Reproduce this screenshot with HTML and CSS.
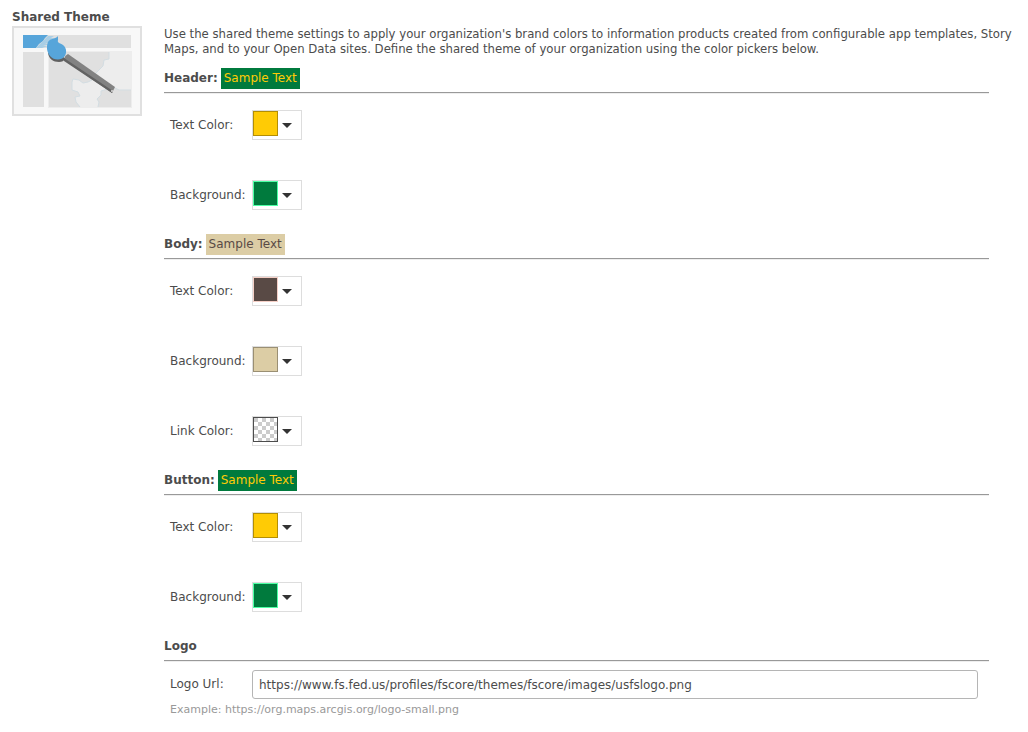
FILE: index.html
```html
<!DOCTYPE html>
<html lang="en">
<head>
    <meta charset="UTF-8">
    <meta name="viewport" content="width=device-width, initial-scale=1.0">
    <title>Shared Theme</title>
    <link rel="stylesheet" href="styles.css">
</head>
<body>
    <h1 class="page-title">Shared Theme</h1>
    <div class="theme">
        <svg class="theme-thumb" viewBox="0 0 130 90" role="img" aria-label="Shared theme">
            <rect x="1" y="1" width="128" height="88" fill="#f8f8f8" stroke="#e0e0e0" stroke-width="2"/>
            <rect x="11" y="9" width="108" height="13" fill="#e0e0e0"/>
            <path d="M11 9H36L33 12L31 15L27 18L24 22H11Z" fill="#57a5da"/>
            <path d="M36 10H42L39 12H43L37 15H42L33 18H38L31 20H36L30 22H24L28 18L31 15Z" fill="#a9cee5"/>
            <rect x="11" y="26" width="21" height="55" fill="#e0e0e0"/>
            <rect x="36" y="25" width="84" height="57" fill="#e0e0e0"/>
            <path d="M97 26V33L92 34L91 40L87 44L83 48L80 54L76 56L71 57L67 54L61 53L60 56L60 64L66 66L68 70L63 71L64 76L68 81H86L87 76L85 73L89 69V65L99 62H103L107 64H120V26Z" fill="#ededed"/>
            <path d="M97 26V33L92 34L91 40L87 44L83 48L80 54L76 56L71 57L67 54L61 53L60 56L60 64L66 66L68 70L63 71L64 76L68 81M86 81L87 76L85 73L89 69V65L99 62H103L107 64H119" fill="none" stroke="#d3dde2"/>
            <rect x="36.500" y="25.500" width="83" height="56" fill="none" stroke="#ededed"/>
            <path d="M56 28Q52 30 52 34L100 67L103 61Z" fill="#828282"/>
            <path d="M52 32L101 65L100 67L52 35Z" fill="#626262"/>
            <circle cx="100" cy="65" r="1" fill="#ddd"/>
            <path d="M36 27C37 33 41 36 47 36C50 36 52 35 53 33L50 29Z" fill="#606060"/>
            <path d="M46 10C44 13 38 12 36 16C34 21 35 26 38 30C42 35 50 34 52 31C55 28 55 22 51 19C48 17 45 17 46 14Z" fill="#57a5da"/>
        </svg>

        <div class="theme-settings">
            <p class="description">Use the shared theme settings to apply your organization's brand colors to information products created from configurable app templates, Story Maps, and to your Open Data sites. Define the shared theme of your organization using the color pickers below.</p>

            <section class="group">
                <h2 class="group-title">Header: <span class="sample sample-green">Sample Text</span></h2>
                <div class="rows">
                    <div class="row">
                        <label for="header-text">Text Color:</label>
                        <button type="button" class="picker" id="header-text"><span class="swatch yellow"></span><span class="arrow"></span></button>
                    </div>
                    <div class="row">
                        <label for="header-bg">Background:</label>
                        <button type="button" class="picker" id="header-bg"><span class="swatch green"></span><span class="arrow"></span></button>
                    </div>
                </div>
            </section>

            <section class="group">
                <h2 class="group-title">Body: <span class="sample sample-tan">Sample Text</span></h2>
                <div class="rows">
                    <div class="row">
                        <label for="body-text">Text Color:</label>
                        <button type="button" class="picker" id="body-text"><span class="swatch brown"></span><span class="arrow"></span></button>
                    </div>
                    <div class="row">
                        <label for="body-bg">Background:</label>
                        <button type="button" class="picker" id="body-bg"><span class="swatch tan"></span><span class="arrow"></span></button>
                    </div>
                    <div class="row">
                        <label for="body-link">Link Color:</label>
                        <button type="button" class="picker" id="body-link"><span class="swatch empty"></span><span class="arrow"></span></button>
                    </div>
                </div>
            </section>

            <section class="group">
                <h2 class="group-title">Button: <span class="sample sample-green">Sample Text</span></h2>
                <div class="rows">
                    <div class="row">
                        <label for="button-text">Text Color:</label>
                        <button type="button" class="picker" id="button-text"><span class="swatch yellow"></span><span class="arrow"></span></button>
                    </div>
                    <div class="row">
                        <label for="button-bg">Background:</label>
                        <button type="button" class="picker" id="button-bg"><span class="swatch green"></span><span class="arrow"></span></button>
                    </div>
                </div>
            </section>

            <section class="group">
                <h2 class="group-title">Logo</h2>
                <div class="logo-row">
                    <label for="logo-url">Logo Url:</label>
                    <input type="text" id="logo-url" value="https://www.fs.fed.us/profiles/fscore/themes/fscore/images/usfslogo.png">
                </div>
                <p class="hint">Example: https://org.maps.arcgis.org/logo-small.png</p>
            </section>
        </div>
    </div>
</body>
</html>
```
FILE: styles.css
```css
* {
    box-sizing: border-box;
}
body {
    margin: 0;
    padding: 8px 0 12px 12px;
    background-color: #fff;
    color: #4c4c4c;
    font-family: "DejaVu Sans", Verdana, sans-serif;
    font-size: 12px;
    line-height: 15px;
}
.page-title {
    margin: 0;
    font-size: 12px;
    line-height: 18px;
}
.theme {
    display: flex;
    align-items: flex-start;
    gap: 22px;
}
.theme-thumb {
    flex: none;
    width: 130px;
    height: 90px;
}
.theme-settings {
    flex: 1;
    min-width: 0;
}
.description {
    margin: 0 0 12px;
    font-family: "DejaVu Sans Condensed", "DejaVu Sans", sans-serif;
    font-size: 13px;
}

/* groups */
.group {
    margin-bottom: 24px;
}
.group-title {
    display: flex;
    align-items: center;
    gap: 3px;
    height: 25px;
    margin: 0 39px 0 0;
    padding-bottom: 3px;
    border-bottom: 1px solid #999;
    box-shadow: 0 1px #eee;
    font-size: 12px;
}
.sample {
    padding: 3px;
    font-weight: normal;
}
.sample-green {
    background-color: #007a3d;
    color: #ffcb05;
}
.sample-tan {
    background-color: #dccda5;
    color: #594a45;
}
.rows {
    display: flex;
    flex-direction: column;
    gap: 40px;
    padding: 17px 0 0 6px;
}
.row,
.logo-row {
    display: flex;
    align-items: center;
}
.row label,
.logo-row label {
    flex: none;
    width: 82px;
}

/* color picker */
.picker {
    display: flex;
    align-items: flex-start;
    width: 50px;
    height: 30px;
    padding: 0;
    background-color: #fff;
    border: 1px solid #ddd;
    cursor: pointer;
}
.swatch {
    width: 25px;
    height: 25px;
    border: 1px solid;
}
.arrow {
    align-self: center;
    margin-left: 4px;
    border: 5px solid transparent;
    border-top-color: #333;
    border-bottom: 0;
}
.yellow {
    background-color: #ffcb05;
    border-color: #b38e04;
}
.green {
    background-color: #007a3d;
    border-color: #4dffa5;
}
.brown {
    background-color: #594a45;
    border-color: #f5cfc6;
}
.tan {
    background-color: #dccda5;
    border-color: #9a8f73;
}
.empty {
    background: repeating-conic-gradient(#fff 0 25%, #ccc 0 50%) 0 0 / 8px 8px;
    border-color: #4c4c4c;
}

/* logo */
.logo-row {
    padding: 9px 50px 0 6px;
}
.logo-row input {
    flex: 1;
    min-width: 0;
    height: 29px;
    padding: 0 6px;
    border: 1px solid #b5b5b5;
    border-radius: 3px;
    color: #4c4c4c;
    font-family: inherit;
    font-size: 12px;
}
.hint {
    margin: 3px 0 0 6px;
    color: #999;
    font-size: 11px;
}
```
